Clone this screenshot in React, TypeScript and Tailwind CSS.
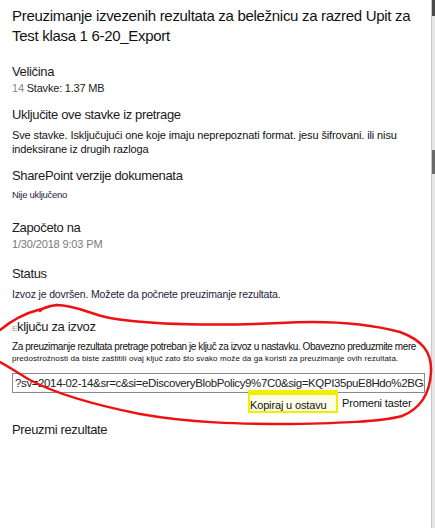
import React from 'react';

const font = { fontFamily: '"Liberation Sans", Arial, sans-serif' };

const heading = 'text-[13px] leading-[16px] tracking-[-0.35px] text-[#1b1b1b]';

export default function App() {
  const key = '?sv=2014-02-14&sr=c&si=eDiscoveryBlobPolicy9%7C0&sig=KQPI35puE8Hdo%2BG3c';

  return (
    <div className="relative flex h-[528px] w-[435px] overflow-hidden bg-white" style={font}>
      {/* panel */}
      <div className="flex w-[432px] flex-col whitespace-nowrap border-r border-[#c8c8c8] px-3 pt-[6px]">
        <h1 className="text-[15px] font-normal leading-[20px] tracking-[-0.3px] text-[#111]">
          Preuzimanje izvezenih rezultata za beležnicu za razred Upit za
          <br />
          Test klasa 1 6-20_Export
        </h1>

        <div className={`mt-[18px] ${heading}`}>Veličina</div>
        <div className="mt-[1px] text-[11px] leading-[14px] tracking-[-0.2px] text-[#222]">
          <span className="text-[#888]">14</span> Stavke: 1.37 MB
        </div>

        <div className={`mt-[12px] ${heading}`}>Uključite ove stavke iz pretrage</div>
        <p className="mt-[5px] text-[11px] leading-[14px] tracking-[-0.12px] text-[#111]">
          Sve stavke. Isključujući one koje imaju neprepoznati format. jesu šifrovani. ili nisu
          <br />
          indeksirane iz drugih razloga
        </p>

        <div className={`mt-[12px] ${heading}`}>SharePoint verzije dokumenata</div>
        <div className="mt-[4px] text-[9.5px] leading-[14px] tracking-[-0.3px] text-[#1c2340]">Nije uključeno</div>

        <div className={`mt-[18px] ${heading}`}>Započeto na</div>
        <div className="mt-[1px] text-[11px] leading-[14px] tracking-[-0.15px] text-[#7a7a7a]">1/30/2018 9:03 PM</div>

        <div className={`mt-[15px] ${heading}`}>Status</div>
        <div className="mt-[5px] text-[10.5px] leading-[14px] tracking-[-0.15px] text-[#1c1c3a]">
          Izvoz je dovršen. Možete da počnete preuzimanje rezultata.
        </div>

        <div className={`mt-[18px] ${heading}`}>
          <span className="text-[8px] text-[#999]">E</span>ključu za izvoz
        </div>
        <p className="mt-[4px] text-[10px] leading-[12px] tracking-[-0.42px] text-[#111]">
          Za preuzimanje rezultata pretrage potreban je ključ za izvoz u nastavku. Obavezno preduzmite mere
        </p>
        <p className="text-[8px] leading-[12px] tracking-[0.1px] text-[#111]">
          predostrožnosti da biste zaštitili ovaj ključ zato što svako može da ga koristi za preuzimanje ovih rezultata.
        </p>

        <div className="mt-[8px] h-[20px] w-[413px] overflow-hidden border border-[#8a8a8a] px-[2px] text-[11.5px] leading-[18px] tracking-[-0.38px] text-[#222]">
          {key}
        </div>

        <div className="relative -mt-[3px] flex">
          <div className="ml-[236px] h-[23px] w-[90px] border-x-2 border-b-2 border-t-[5px] border-[#f2ee00] bg-[#fffde8] pt-[3px] text-[11px] leading-[14px] tracking-[-0.15px] text-[#111]">
            Kopiraj u ostavu
          </div>
          <div className="ml-[4px] mt-[6px] text-[11px] leading-[14px] tracking-[-0.15px] text-[#111]">Promeni taster</div>
        </div>

        <div className={`mt-[9px] ${heading}`}>Preuzmi rezultate</div>
      </div>

      {/* scroll strip */}
      <div className="flex w-[3px] flex-col bg-[#e6e6e6]">
        <div className="h-[16px] bg-[#4a4a4a]" />
        <div className="mt-[134px] h-[24px] bg-[#6a6a6a]" />
      </div>

      {/* red annotation */}
      <svg className="pointer-events-none absolute left-0 top-0" width="435" height="528" viewBox="0 0 435 528">
        <path
          d="M0 330 C10 322 22 314 38 310 C46 308 52 305 57 305 C48 306 42 308 40 311 M57 305 C75 305 90 314 110 318 C150 325 220 326 280 323 C330 320 370 324 400 332 C422 340 432 352 431 372 C430 392 422 408 402 416 C380 422 340 423 290 424 C240 424 190 423 140 414 C100 406 60 396 30 380 C18 373 8 366 0 362"
          fill="none"
          stroke="#ee1111"
          strokeWidth="2.5"
          strokeLinecap="round"
          strokeLinejoin="round"
        />
      </svg>
    </div>
  );
}
